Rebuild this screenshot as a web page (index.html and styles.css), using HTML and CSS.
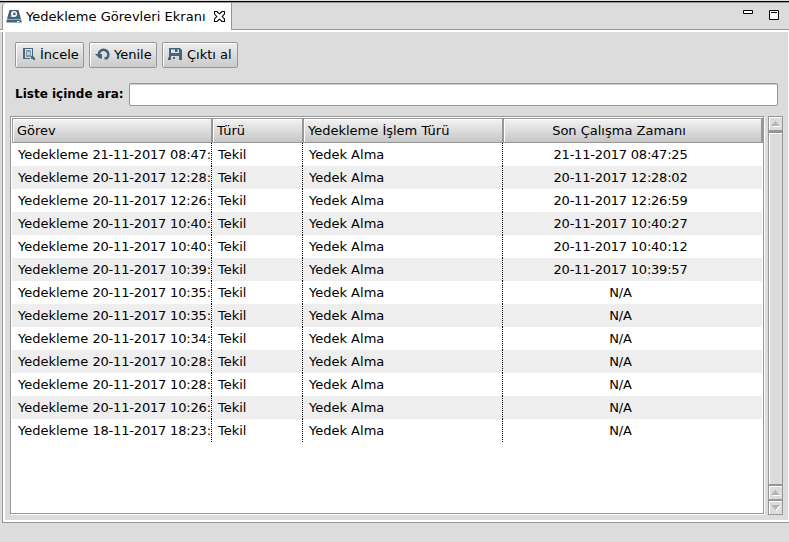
FILE: index.html
```html
<!DOCTYPE html>
<html lang="tr">
<head>
<meta charset="utf-8">
<title>Yedekleme Görevleri Ekranı</title>
<link rel="stylesheet" href="styles.css">
</head>
<body>
<header class="tabs">
  <div class="tab">
    <svg width="16" height="16" viewBox="0 0 16 16"><path fill="#41667b" d="M3.500 1h9L15 10H1zM.5 11h15v2.500H.5z"/><path fill="#9db0ba" d="M1 10h14v1H1z"/><circle cx="8" cy="5" r="3" fill="#fff"/><circle cx="8.300" cy="4.900" r="1.400" fill="#41667b"/><path fill="#fff" d="M4.500 8l1.500-1.500 1 1zM11 12h2.500v1H11z"/></svg>
    <span class="title">Yedekleme Görevleri Ekranı</span>
    <svg class="close" width="11" height="11" viewBox="0 0 11 11"><path fill="#fff" stroke="#000" stroke-width="1.100" d="M.5.500H3l2.500 2.300L8 .500h2.500V3L8.200 5.500l2.300 2.500v2.500H8L5.500 8.200 3 10.500H.5V8l2.300-2.500L.5 3z"/></svg>
  </div>
  <div class="window">
    <svg width="10" height="4"><path fill="#fff" stroke="#000" d="M.5.500h9v3h-9z"/></svg>
    <svg width="10" height="10"><path fill="#fff" stroke="#000" d="M.5.500h9v9h-9zM2 2.500h6"/></svg>
  </div>
</header>
<main class="panel">
  <div class="toolbar">
    <button class="b1"><svg width="14" height="14" viewBox="0 0 14 14"><path fill="#48697b" d="M1 1h10v8h-1V2H3v9h5v1H1z"/><path fill="#829ba8" d="M4 3h5v7H4z"/><path fill="#c8d0d4" d="M5 5h3v3H5z"/><path fill="#48697b" d="M9 9h2l2 2v2h-2v-1H9z"/></svg>İncele</button>
    <button class="b2"><svg width="16" height="14" viewBox="0 0 16 14"><path fill="none" stroke="#41667b" stroke-width="2.500" d="M3.800 8a4.800 4.800 0 1 1 7.800 3.400"/><path fill="#41667b" d="M0 7h7v4.500H4.500zM9.500 10h3v2.500h-3z"/></svg>Yenile</button>
    <button class="b3"><svg width="14" height="14" viewBox="0 0 14 14"><path fill="#41667b" fill-rule="evenodd" d="M1 1h11l2 2v10h-3V9H3v4H0V11l1-1zm2 1.500V6h8V2.500z"/><path fill="#41667b" d="M7 2h2.500v3H7zM5 10h2v2H5z"/></svg>Çıktı al</button>
  </div>
  <label class="search"><span>Liste içinde ara:</span><input type="text"></label>
  <div class="list">
    <div class="table">
      <div class="row head"><span>Görev</span><span>Türü</span><span>Yedekleme İşlem Türü</span><span>Son Çalışma Zamanı</span></div>
      <div class="rows" id="rows"></div>
    </div>
    <div class="scroll">
      <div class="arrow top"><svg width="9" height="5"><path d="M4.500 0L9 5H0z"/></svg></div>
      <div class="thumb"></div>
      <div class="arrow"><svg width="9" height="5"><path d="M4.500 0L9 5H0z"/></svg></div>
      <div class="arrow"><svg width="9" height="5"><path d="M0 0h9L4.500 5z"/></svg></div>
    </div>
  </div>
</main>
<script src="script.js"></script>
</body>
</html>
```
FILE: styles.css
```css
* { box-sizing: border-box; }
body {
  margin: 0; height: 542px; overflow: hidden; background: #dcdcdc;
  font: 13px/22px "DejaVu Sans", sans-serif; color: #000;
}
svg { display: block; flex: none; }
.tabs {
  display: flex; justify-content: space-between; height: 32px; padding-left: 2px;
  background: linear-gradient(#dcdcdc 1px, #000 1px 2px, #979792 2px 3px, #dcdcdc 3px 29px, #979797 29px 30px, #fff 30px);
}
.tab {
  display: flex; align-items: center; width: 230px; height: 27px; margin-top: 3px; padding-left: 3px;
  border: 1px solid #979797; border-width: 0 1px 0 1px; border-top-left-radius: 4px;
  background: #fff; box-shadow: 0 1px #fff; white-space: nowrap;
}
.title { width: 180px; margin-left: 4px; letter-spacing: .03px; }
.close { margin: 0 0 1px 8px; }
.window { display: flex; gap: 16px; padding: 10px 10px 0 0; }
.panel {
  display: flex; flex-direction: column; height: 491px; margin-left: 2px; padding: 10px 5px 5px;
  border: solid #979797; border-width: 0 0 1px 1px;
  box-shadow: inset 2px -2px #fff, inset -1px 0 #fff;
}
.toolbar { display: flex; gap: 5px; padding-left: 7px; }
button {
  display: flex; align-items: center; height: 26px; padding: 0 0 0 6px; white-space: nowrap;
  border: 1px solid #979797; border-radius: 2px; box-shadow: inset 1px 1px #fff;
  background: linear-gradient(#ededed, #cacaca); font: inherit; color: inherit;
}
button svg { margin-top: -2px; }
.b1 { width: 69px; gap: 4px; }
.b2 { width: 68px; gap: 3px; padding-left: 5px; }
.b3 { width: 76px; gap: 5px; padding-left: 5px; }
.search { display: flex; align-items: center; height: 23px; margin: 15px 6px 0 7px; font-size: 12px; font-weight: bold; line-height: 20px; white-space: nowrap; }
.search span { padding-bottom: 2px; }
input { flex: 1; min-width: 0; height: 23px; margin-left: 5px; border: 1px solid #979797; border-radius: 2px; background: #fff; box-shadow: inset 0 1px #ccc; }
.list { display: flex; gap: 4px; height: 399px; margin-top: 10px; padding-left: 2px; }
.table { width: 754px; height: 398px; padding: 1px; border: 1px solid #979797; background: #fff; box-shadow: 1px 1px #fff; }
.row { display: grid; grid-template-columns: 200px 91px 200px 260px; height: 23px; line-height: 23px; }
.row > span { overflow: hidden; white-space: nowrap; padding-left: 6px; border-right: 1px dotted #000; }
.row > span:last-child { border: 0; text-align: center; padding: 0 25px 0 0; }
.row:nth-child(even) { background: #eee; }
.time { letter-spacing: -.22px; }
.name { letter-spacing: -.18px; }
.head.row { height: 25px; line-height: 25px; }
.head.row > span {
  padding-left: 4px; border: 1px solid #979797; background: linear-gradient(#f3f3f3, #c6c6c6);
  box-shadow: inset 1px 1px #fff; line-height: 24px;
}
.head.row > span:last-child { border: 1px solid #979797; border-right-width: 2px; padding: 0 27px 0 0; }
.scroll { display: flex; flex-direction: column; width: 15px; height: 399px; }
.arrow, .thumb { border: 1px solid #979797; box-shadow: inset 1px 1px #fff; }
.arrow { display: flex; align-items: center; justify-content: center; height: 15px; }
.arrow path { fill: #b4b4b4; }
.arrow svg { filter: drop-shadow(1px 1px 0 #fff); }
.thumb { flex: 1; border-top-width: 2px; }
```
FILE: script.js
```js
const tasks = [
  ["21-11-2017 08:47:25", true], ["20-11-2017 12:28:02", true], ["20-11-2017 12:26:59", true],
  ["20-11-2017 10:40:27", true], ["20-11-2017 10:40:12", true], ["20-11-2017 10:39:57", true],
  ["20-11-2017 10:35:"], ["20-11-2017 10:35:"], ["20-11-2017 10:34:"],
  ["20-11-2017 10:28:"], ["20-11-2017 10:28:"], ["20-11-2017 10:26:"], ["18-11-2017 18:23:"]
];
document.getElementById("rows").innerHTML = tasks.map(([time, ran]) =>
  `<div class="row"><span>Yedekleme <span class="name">${time.slice(0, 17)}</span></span><span>Tekil</span><span>Yedek Alma</span><span class="time">${ran ? time : "N/A"}</span></div>`
).join("");
```
